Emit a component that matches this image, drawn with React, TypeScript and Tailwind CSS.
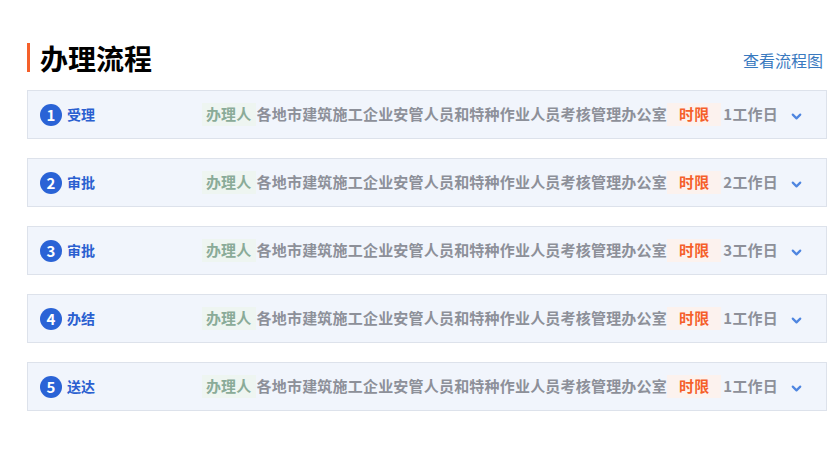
import { ChevronDown } from "lucide-react";

const steps = [
  { no: 1, name: "受理", days: "1工作日" },
  { no: 2, name: "审批", days: "2工作日" },
  { no: 3, name: "审批", days: "3工作日" },
  { no: 4, name: "办结", days: "1工作日" },
  { no: 5, name: "送达", days: "1工作日" },
];

const font = { fontFamily: '"Noto Sans CJK SC", "Noto Sans", sans-serif' };

function StepRow({ no, name, days }: { no: number; name: string; days: string }) {
  return (
    <div className="flex h-[49px] items-center justify-between border border-[#dde2eb] bg-[#f1f5fc] pl-[12px] pr-[22px]">
      <div className="flex items-center gap-[5px]">
        <div className="flex h-[22px] w-[22px] items-center justify-center rounded-full bg-[#2a63d6] text-[15px] font-bold leading-none text-white">
          {no}
        </div>
        <span className="text-[14px] font-bold text-[#2a5fd0]">{name}</span>
      </div>
      <div className="flex items-center text-[15px] font-bold tracking-[0.2px] text-[#8d9099]">
        <span className="bg-[#eef5f1] px-[4px] text-[#8aab98]">办理人</span>
        <span className="ml-px">各地市建筑施工企业安管人员和特种作业人员考核管理办公室</span>
        <span className="bg-[#fcf2ee] px-3 text-[#f5602a]">时限</span>
        <span className="ml-[2px]">{days}</span>
        <ChevronDown className="ml-[11px] mt-[3px] h-[15px] w-[15px] text-[#4f86e0]" strokeWidth={3.5} />
      </div>
    </div>
  );
}

export default function App() {
  return (
    <div className="h-[450px] w-[840px] bg-white pl-[27px] pr-[13px] pt-[43px]" style={font}>
      <div className="flex items-center justify-between">
        <div className="flex items-center">
          <div className="h-[29px] w-[3px] bg-[#f5602a]" />
          <h2 className="ml-[10px] text-[28px] font-bold leading-[28px] text-black">办理流程</h2>
        </div>
        <a className="mr-[4px] mt-[4px] text-[16px] text-[#3a7abf]">查看流程图</a>
      </div>
      <div className="mt-[18px] flex flex-col gap-[19px]">
        {steps.map((s) => (
          <StepRow key={s.no} {...s} />
        ))}
      </div>
    </div>
  );
}
